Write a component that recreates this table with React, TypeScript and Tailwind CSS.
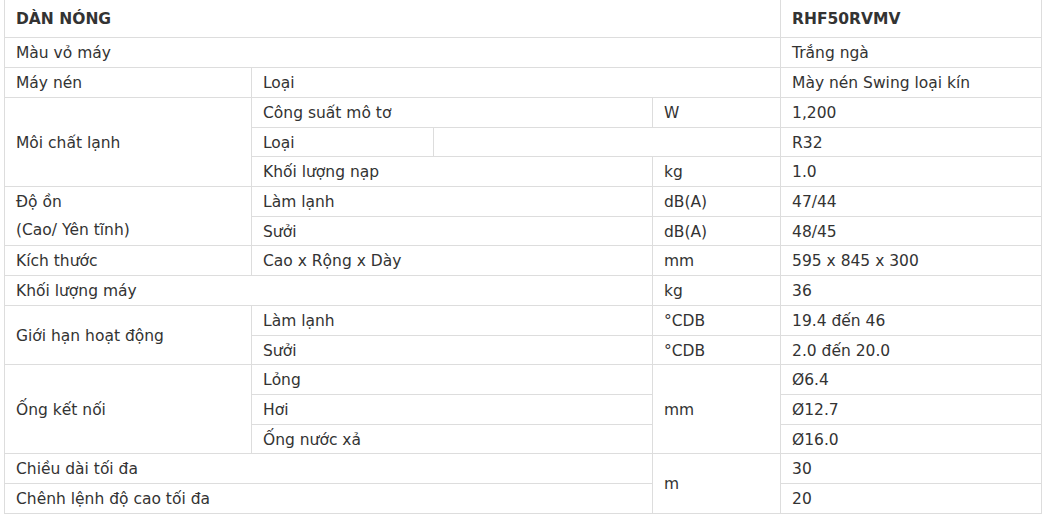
import React from "react";

const td = "border border-[#dddddd] px-[11px] pt-[2px] pb-0 align-middle leading-[20px]";

export default function App() {
  return (
    <div
      className="bg-white text-[#333333] text-[15.5px] min-h-[524px]"
      style={{ fontFamily: '"DejaVu Sans", Tahoma, sans-serif' }}
    >
      <table className="ml-[4px] w-[1037px] table-fixed border-collapse">
        <colgroup>
          <col className="w-[247px]" />
          <col className="w-[182px]" />
          <col className="w-[219px]" />
          <col className="w-[128px]" />
          <col className="w-[261px]" />
        </colgroup>
        <tbody>
          <tr className="h-[37px]">
            <td colSpan={4} className={`${td} border-t-0 font-bold`}>DÀN NÓNG</td>
            <td className={`${td} border-t-0 font-bold`}>RHF50RVMV</td>
          </tr>
          <tr className="h-[30px]">
            <td colSpan={4} className={td}>Màu vỏ máy</td>
            <td className={td}>Trắng ngà</td>
          </tr>
          <tr className="h-[30px]">
            <td className={td}>Máy nén</td>
            <td colSpan={3} className={td}>Loại</td>
            <td className={td}>Mày nén Swing loại kín</td>
          </tr>
          <tr className="h-[30px]">
            <td rowSpan={3} className={td}>Môi chất lạnh</td>
            <td colSpan={2} className={td}>Công suất mô tơ</td>
            <td className={td}>W</td>
            <td className={td}>1,200</td>
          </tr>
          <tr className="h-[29px]">
            <td className={td}>Loại</td>
            <td colSpan={2} className={td}></td>
            <td className={td}>R32</td>
          </tr>
          <tr className="h-[30px]">
            <td colSpan={2} className={td}>Khối lượng nạp</td>
            <td className={td}>kg</td>
            <td className={td}>1.0</td>
          </tr>
          <tr className="h-[30px]">
            <td rowSpan={2} className="border border-[#dddddd] px-[11px] pt-[1px] pb-0 align-middle leading-[28px]">
              Độ ồn
              <br />
              (Cao/ Yên tĩnh)
            </td>
            <td colSpan={2} className={td}>Làm lạnh</td>
            <td className={td}>dB(A)</td>
            <td className={td}>47/44</td>
          </tr>
          <tr className="h-[29px]">
            <td colSpan={2} className={td}>Sưởi</td>
            <td className={td}>dB(A)</td>
            <td className={td}>48/45</td>
          </tr>
          <tr className="h-[30px]">
            <td className={td}>Kích thước</td>
            <td colSpan={2} className={td}>Cao x Rộng x Dày</td>
            <td className={td}>mm</td>
            <td className={td}>595 x 845 x 300</td>
          </tr>
          <tr className="h-[30px]">
            <td colSpan={3} className={td}>Khối lượng máy</td>
            <td className={td}>kg</td>
            <td className={td}>36</td>
          </tr>
          <tr className="h-[30px]">
            <td rowSpan={2} className={td}>Giới hạn hoạt động</td>
            <td colSpan={2} className={td}>Làm lạnh</td>
            <td className={td}>°CDB</td>
            <td className={td}>19.4 đến 46</td>
          </tr>
          <tr className="h-[29px]">
            <td colSpan={2} className={td}>Sưởi</td>
            <td className={td}>°CDB</td>
            <td className={td}>2.0 đến 20.0</td>
          </tr>
          <tr className="h-[30px]">
            <td rowSpan={3} className={td}>Ống kết nối</td>
            <td colSpan={2} className={td}>Lỏng</td>
            <td rowSpan={3} className={td}>mm</td>
            <td className={td}>Ø6.4</td>
          </tr>
          <tr className="h-[30px]">
            <td colSpan={2} className={td}>Hơi</td>
            <td className={td}>Ø12.7</td>
          </tr>
          <tr className="h-[29px]">
            <td colSpan={2} className={td}>Ống nước xả</td>
            <td className={td}>Ø16.0</td>
          </tr>
          <tr className="h-[30px]">
            <td colSpan={3} className={td}>Chiều dài tối đa</td>
            <td rowSpan={2} className={td}>m</td>
            <td className={td}>30</td>
          </tr>
          <tr className="h-[30px]">
            <td colSpan={3} className={td}>Chênh lệnh độ cao tối đa</td>
            <td className={td}>20</td>
          </tr>
        </tbody>
      </table>
    </div>
  );
}
